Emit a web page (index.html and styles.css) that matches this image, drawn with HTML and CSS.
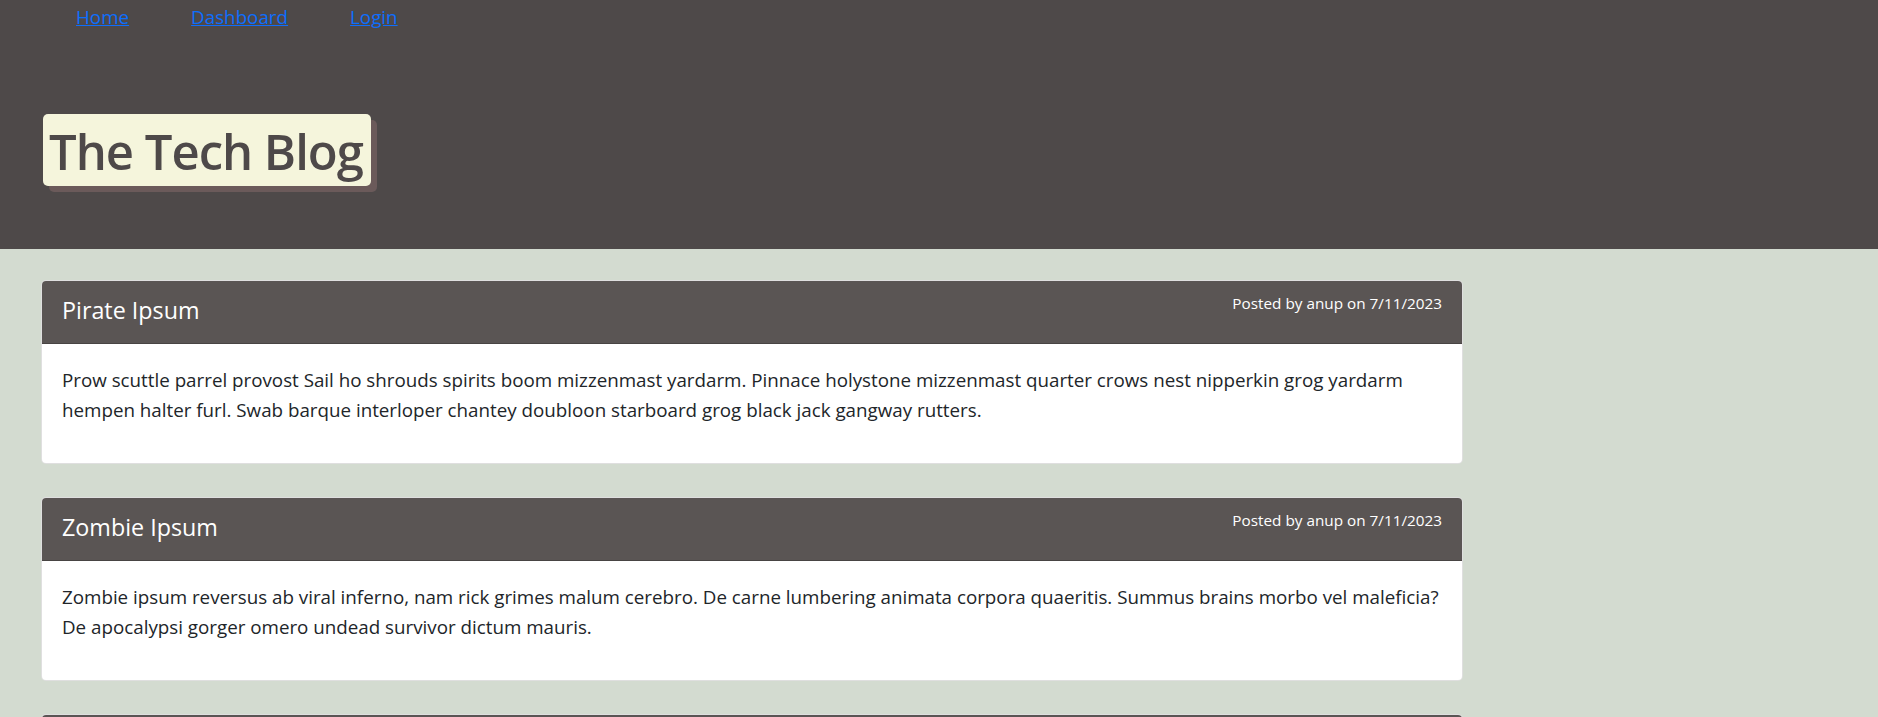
FILE: index.html
```html
<!DOCTYPE html>
<html lang="en">
<head>
<meta charset="utf-8">
<title>The Tech Blog</title>
<link rel="stylesheet" href="styles.css">
</head>
<body>
<header class="site-header">
  <nav class="nav">
    <a class="nav-link" href="#">Home</a>
    <a class="nav-link" href="#">Dashboard</a>
    <a class="nav-link" href="#">Login</a>
  </nav>
  <h1 class="brand">The Tech Blog</h1>
</header>
<main class="posts">
  <article class="card">
    <div class="card-header">
      <h2 class="card-title">Pirate Ipsum</h2>
      <span class="card-meta">Posted by anup on 7/11/2023</span>
    </div>
    <div class="card-body">
      <p>Prow scuttle parrel provost Sail ho shrouds spirits boom mizzenmast yardarm. Pinnace holystone mizzenmast quarter crows nest nipperkin grog yardarm hempen halter furl. Swab barque interloper chantey doubloon starboard grog black jack gangway rutters.</p>
    </div>
  </article>
  <article class="card">
    <div class="card-header">
      <h2 class="card-title">Zombie Ipsum</h2>
      <span class="card-meta">Posted by anup on 7/11/2023</span>
    </div>
    <div class="card-body">
      <p>Zombie ipsum reversus ab viral inferno, nam rick grimes malum cerebro. De carne lumbering animata corpora quaeritis. Summus brains morbo vel maleficia? De apocalypsi gorger omero undead survivor dictum mauris.</p>
    </div>
  </article>
  <article class="card">
    <div class="card-header card-header-empty"></div>
  </article>
</main>
</body>
</html>
```
FILE: styles.css
```css
* { box-sizing: border-box; }

html, body {
  margin: 0;
  padding: 0;
}

body {
  font-family: "Open Sans", "Noto Sans", sans-serif;
  background: #d3dbd0;
  color: #212529;
  overflow: hidden;
}

.site-header {
  display: flex;
  flex-direction: column;
  align-items: flex-start;
  background: #4e4949;
  padding: 4px 0 63px 0;
}

.nav {
  display: flex;
  gap: 62px;
  padding-left: 76px;
  height: 26px;
  font-size: 18.8px;
  line-height: 26px;
}

.nav-link {
  color: #0d6efd;
  text-decoration: underline;
}

.brand {
  margin: 84px 0 0 43px;
  padding: 3px 8px 0 6px;
  height: 72px;
  font-size: 49px;
  letter-spacing: -1px;
  line-height: 69px;
  font-weight: 600;
  color: #4e4949;
  background: #f5f5dc;
  border-radius: 5px;
  box-shadow: 6px 6px 0 #6b5a5a;
}

.posts {
  padding: 31px 0 0 41px;
}

.card {
  width: 1422px;
  margin-bottom: 32.5px;
  background: #fff;
  border: 1px solid rgba(0, 0, 0, 0.125);
  border-radius: 5px;
  overflow: hidden;
}

.card-header {
  display: flex;
  justify-content: space-between;
  align-items: flex-start;
  padding: 12px 20px 16px 20px;
  background: #5a5554;
  color: #fff;
  border-bottom: 1px solid rgba(0, 0, 0, 0.2);
}

.card-header-empty {
  height: 64px;
}

.card-title {
  margin: 0;
  font-size: 23.3px;
  line-height: 34px;
  font-weight: 400;
}

.card-meta {
  font-size: 15.3px;
  line-height: normal;
}

.card-body {
  padding: 22px 20px;
}

.card-body p {
  margin: 0 0 16px 0;
  font-size: 18.78px;
  line-height: 29.7px;
}
```
